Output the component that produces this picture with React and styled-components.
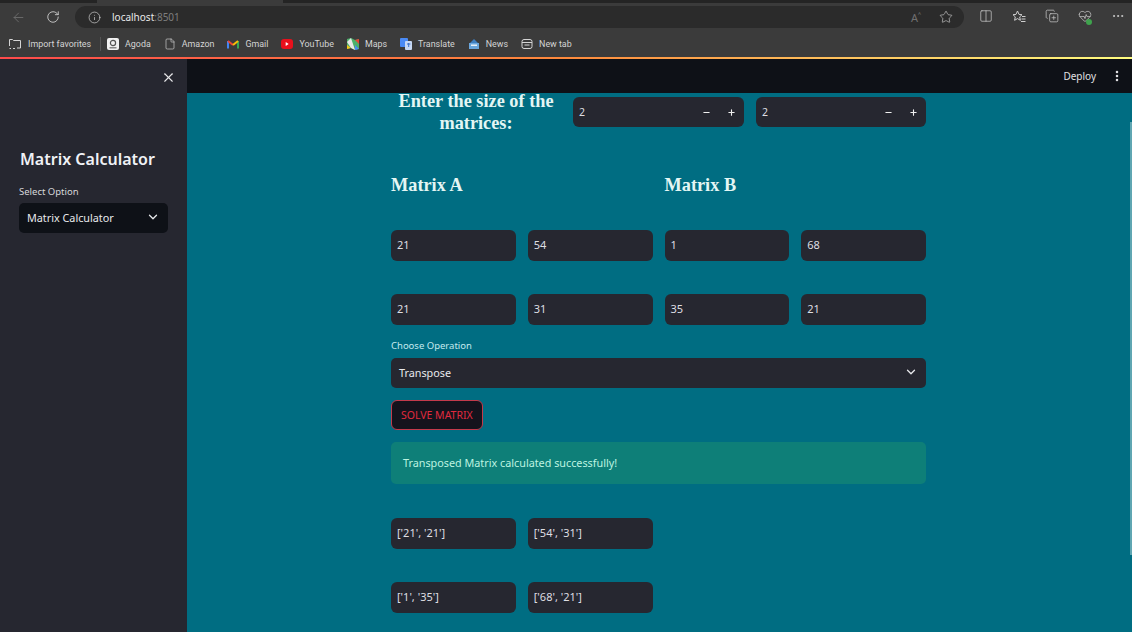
import styled, { createGlobalStyle } from 'styled-components';
import { ArrowLeft, RotateCw, Info, Star, Columns2, CopyPlus, HeartPulse, Ellipsis, File, X, ChevronDown, Minus, Plus, EllipsisVertical } from 'lucide-react';

const Global = createGlobalStyle`
  html, body { margin: 0; padding: 0; height: 100%; overflow: hidden; background: #006d82; }
  body { font-family: "Noto Sans", "Liberation Sans", sans-serif; }
  * { box-sizing: border-box; }
`;

const Page = styled.div`
  width: 1132px;
  height: 632px;
  display: flex;
  flex-direction: column;
  overflow: hidden;
`;

/* browser chrome */
const TabStrip = styled.div`
  height: 3px;
  flex: none;
  padding-left: 97px;
  background: #242424;
`;

const ActiveTab = styled.div`
  width: 186px;
  height: 3px;
  background: #3b3b3b;
`;

const Toolbar = styled.div`
  height: 28px;
  flex: none;
  display: flex;
  align-items: center;
  background: #3b3b3b;
  color: #d8d8d8;
`;

const ToolButton = styled.div`
  position: relative;
  width: ${p => p.$w || 33}px;
  flex: none;
  display: flex;
  justify-content: center;
  color: ${p => (p.$dim ? '#6f6f6f' : '#cfcfcf')};
`;

const HealthDot = styled.span`
  position: absolute;
  right: 9px;
  bottom: 0;
  width: 6px;
  height: 6px;
  border-radius: 50%;
  background: #3fa34d;
`;

const UrlPill = styled.div`
  flex: 1;
  height: 22px;
  margin: 0 5px;
  padding-right: 3px;
  display: flex;
  align-items: center;
  border-radius: 11px;
  background: #2b2b2b;
`;

const UrlText = styled.span`
  flex: 1;
  font-size: 10px;
  color: #e8e8e8;
  margin-left: -1px;
  span { color: #7e7e7e; }
`;

const ReadAloud = styled.span`
  font-size: 11px;
  sup { font-size: 7px; }
`;

const ToolIcons = styled.div`
  flex: none;
  display: flex;
  margin-right: -2px;
`;

const Bookmarks = styled.div`
  height: 26px;
  flex: none;
  display: flex;
  align-items: center;
  gap: 13px;
  padding-left: 8px;
  background: #3b3b3b;
`;

const Bookmark = styled.div`
  display: flex;
  align-items: center;
  gap: 6px;
  font-family: Roboto, "Liberation Sans", sans-serif;
  font-size: 8.9px;
  color: #d4d4d4;
  white-space: nowrap;
`;

const Separator = styled.div`
  width: 1px;
  height: 14px;
  margin: 0 -7px 0 -4px;
  background: #555;
`;

const Rainbow = styled.div`
  height: 2px;
  flex: none;
  background: linear-gradient(90deg, #ff4b4b, #fd8a3c 50%, #fffd80);
`;

/* streamlit app */
const AppBody = styled.div`
  flex: 1;
  min-height: 0;
  display: flex;
`;

const Sidebar = styled.aside`
  width: 187px;
  flex: none;
  padding: 0 19px;
  background: #262730;
`;

const CloseRow = styled.div`
  height: 26px;
  display: flex;
  align-items: flex-end;
  justify-content: flex-end;
  color: #e8e8ea;
  margin-right: -8px;
`;

const SideTitle = styled.h2`
  margin: 62px 0 0 1px;
  font-size: 16px;
  line-height: 24px;
  font-weight: 600;
  color: #f0f2f6;
`;

const SmallLabel = styled.div`
  font-size: 9.5px;
  line-height: 13px;
  color: ${p => p.$color || '#d6d7da'};
  margin-top: ${p => p.$top || 0}px;
`;

const SelectBox = styled.div`
  height: 30px;
  display: flex;
  align-items: center;
  justify-content: space-between;
  padding: 0 8px 2px 8px;
  margin-top: ${p => p.$top}px;
  border-radius: 5px;
  font-size: 10.8px;
  color: #e8e9ec;
  background: ${p => p.$bg || '#262730'};
`;

const MainColumn = styled.div`
  flex: 1;
  min-width: 0;
  display: flex;
  flex-direction: column;
`;

const Header = styled.header`
  height: 34px;
  flex: none;
  display: flex;
  align-items: center;
  justify-content: flex-end;
  gap: 14px;
  padding-right: 8px;
  background: #0e1117;
  color: #e0e0e3;
  font-size: 10px;
`;

const Content = styled.main`
  position: relative;
  flex: 1;
  min-height: 0;
  padding: 0 206px 0 204px;
  background: #006d82;
`;

const ScrollThumb = styled.div`
  position: absolute;
  top: 29px;
  right: 0;
  bottom: 77px;
  width: 2px;
  background: #5fa6b2;
`;

const SizeRow = styled.div`
  display: grid;
  grid-template-columns: 170px 171px 170px;
  gap: 12px;
`;

const SizeHeading = styled.h3`
  margin: -3px 0 0;
  text-align: center;
  font-family: "Liberation Serif", serif;
  font-size: 18.3px;
  line-height: 22px;
  font-weight: 700;
  color: #e4f6f4;
`;

const StepperBox = styled.div`
  height: 30px;
  margin-top: 4px;
  display: flex;
  align-items: center;
  padding: 0 8px 0 6px;
  border-radius: 6px;
  font-size: 10.5px;
  color: #dedee2;
  background: #262730;
`;

const StepValue = styled.span`
  flex: 1;
`;

const StepButton = styled.span`
  display: flex;
  margin-left: 16px;
  color: #f0f0f0;
`;

const MatrixTitles = styled.div`
  display: grid;
  grid-template-columns: 1fr 1fr;
  gap: 12px;
  margin-top: 39px;
`;

const MatrixTitle = styled.h3`
  margin: 0;
  font-family: "Liberation Serif", serif;
  font-size: 18.3px;
  line-height: 24px;
  font-weight: 700;
  color: #e4f6f4;
`;

const CellRow = styled.div`
  display: grid;
  grid-template-columns: repeat(4, 1fr);
  gap: 12px;
  margin-top: ${p => p.$top}px;
`;

const Cell = styled.div`
  height: 31px;
  display: flex;
  align-items: center;
  padding: 0 6px 2px;
  border-radius: 6px;
  font-size: 11px;
  color: #dedee2;
  background: #262730;
`;

const SolveButton = styled.button`
  display: block;
  height: 30px;
  margin-top: 12px;
  padding: 0 9px;
  border: 1px solid #c23a4b;
  border-radius: 6px;
  font-family: inherit;
  font-size: 10.5px;
  color: #e02a3e;
  background: #14131c;
`;

const Success = styled.div`
  height: 42px;
  margin-top: 12px;
  display: flex;
  align-items: center;
  padding: 0 12px 2px;
  border-radius: 5px;
  font-size: 10.8px;
  color: #bdf3e0;
  background: #0e7f78;
`;

/* small coloured bookmark icons */
const ImportIcon = () => (
  <svg width="14" height="14" viewBox="0 0 14 14" fill="none" stroke="#d4d4d4" strokeWidth="1">
    <path d="M1.5 9V2.5h3l1 1h7V11H9" />
    <path d="M1.5 11.5h1.5M5 11.5h2" />
  </svg>
);

const AgodaIcon = () => (
  <svg width="12" height="12" viewBox="0 0 12 12">
    <rect width="12" height="12" rx="2" fill="#f2f2f2" />
    <circle cx="6" cy="5" r="2.6" fill="none" stroke="#555" strokeWidth="1.2" />
    <rect x="2.5" y="9" width="7" height="1.5" fill="#888" />
  </svg>
);

const GmailIcon = () => (
  <svg width="12" height="10" viewBox="0 0 12 10" fill="none" strokeWidth="2">
    <path d="M1 9.5V2" stroke="#4285f4" />
    <path d="M11 9.5V2" stroke="#34a853" />
    <path d="M1 2l5 4" stroke="#ea4335" />
    <path d="M6 6l5-4" stroke="#fbbc05" />
  </svg>
);

const YoutubeIcon = () => (
  <svg width="12" height="10" viewBox="0 0 12 10">
    <rect width="12" height="10" rx="3" fill="#e8101c" />
    <path d="M4.7 3l3 2-3 2z" fill="#fff" />
  </svg>
);

const MapsIcon = () => (
  <svg width="12" height="12" viewBox="0 0 12 12">
    <path d="M0 1l4-1 4 2 4-1v10l-4 1-4-2-4 1z" fill="#4caf6a" />
    <path d="M4 0l4 12-4-2L0 4z" fill="#e8e8e8" />
    <path d="M8 2l4-1v5z" fill="#e84335" />
    <path d="M0 7l4 3-4 1z" fill="#f5c518" />
    <path d="M8 7l4 4-4 1z" fill="#4a8af4" />
  </svg>
);

const TranslateIcon = () => (
  <svg width="12" height="12" viewBox="0 0 12 12">
    <rect width="8" height="9" rx="1" fill="#4a8af4" />
    <rect x="5" y="3" width="7" height="9" rx="1" fill="#c7d9f5" />
    <path d="M7 6h3.4M8.7 5v4" stroke="#3a6fc8" strokeWidth="1" />
  </svg>
);

const NewsIcon = () => (
  <svg width="12" height="12" viewBox="0 0 12 12">
    <path d="M1 5h10v6H1z" fill="#6aa6dc" />
    <path d="M2 5l4-4 4 4z" fill="#3f7fc0" />
    <rect x="3" y="6.5" width="6" height="1.5" fill="#e8f0f8" />
  </svg>
);

const NewTabIcon = () => (
  <svg width="12" height="12" viewBox="0 0 12 12" fill="none" stroke="#d4d4d4" strokeWidth="1">
    <rect x="1" y="1.5" width="10" height="9" rx="2" />
    <path d="M1 4.5h10M3.5 7h5" />
  </svg>
);

const FavoritesIcon = () => (
  <svg width="16" height="16" viewBox="0 0 16 16" fill="none" stroke="#cfcfcf" strokeWidth="1">
    <path d="M6.5 2l1.5 3.4 3 .3-2.3 2.2.7 3.4-2.9-1.7-2.9 1.7.7-3.4L2 5.7l3-.3z" />
    <path d="M11 7.5h3.5M10.5 10h4M10 12.5h4.5" />
  </svg>
);

const bookmarks = [
  { icon: <AgodaIcon />, label: 'Agoda' },
  { icon: <File size={12} strokeWidth={1.3} color="#d4d4d4" />, label: 'Amazon' },
  { icon: <GmailIcon />, label: 'Gmail' },
  { icon: <YoutubeIcon />, label: 'YouTube' },
  { icon: <MapsIcon />, label: 'Maps' },
  { icon: <TranslateIcon />, label: 'Translate' },
  { icon: <NewsIcon />, label: 'News' },
  { icon: <NewTabIcon />, label: 'New tab' },
];

function Stepper({ value }) {
  return (
    <StepperBox>
      <StepValue>{value}</StepValue>
      <StepButton><Minus size={9} strokeWidth={3} /></StepButton>
      <StepButton><Plus size={9} strokeWidth={3} /></StepButton>
    </StepperBox>
  );
}

export default function App() {
  return (
    <Page>
      <Global />
      <TabStrip><ActiveTab /></TabStrip>
      <Toolbar>
        <ToolButton $w={36} $dim><ArrowLeft size={15} strokeWidth={1.4} /></ToolButton>
        <ToolButton $w={34}><RotateCw size={14} strokeWidth={1.5} /></ToolButton>
        <UrlPill>
          <ToolButton $w={38}><Info size={13} strokeWidth={1.3} /></ToolButton>
          <UrlText>localhost<span>:8501</span></UrlText>
          <ToolButton $w={30} $dim><ReadAloud>A<sup>ᴬ</sup></ReadAloud></ToolButton>
          <ToolButton $w={30}><Star size={14} strokeWidth={1.1} /></ToolButton>
        </UrlPill>
        <ToolIcons>
          <ToolButton><Columns2 size={14} strokeWidth={1.2} /></ToolButton>
          <ToolButton><FavoritesIcon /></ToolButton>
          <ToolButton><CopyPlus size={14} strokeWidth={1.2} /></ToolButton>
          <ToolButton><HeartPulse size={14} strokeWidth={1.2} /><HealthDot /></ToolButton>
          <ToolButton><Ellipsis size={14} strokeWidth={1.6} /></ToolButton>
        </ToolIcons>
      </Toolbar>
      <Bookmarks>
        <Bookmark><ImportIcon />Import favorites</Bookmark>
        <Separator />
        {bookmarks.map(b => (
          <Bookmark key={b.label}>{b.icon}{b.label}</Bookmark>
        ))}
      </Bookmarks>
      <Rainbow />
      <AppBody>
        <Sidebar>
          <CloseRow><X size={15} strokeWidth={1.8} /></CloseRow>
          <SideTitle>Matrix Calculator</SideTitle>
          <SmallLabel $top={14}>Select Option</SmallLabel>
          <SelectBox $top={5} $bg="#0e1117">
            Matrix Calculator
            <ChevronDown size={14} strokeWidth={2.2} />
          </SelectBox>
        </Sidebar>
        <MainColumn>
          <Header>
            Deploy
            <EllipsisVertical size={14} strokeWidth={2.4} />
          </Header>
          <Content>
            <SizeRow>
              <SizeHeading>Enter the size of the matrices:</SizeHeading>
              <Stepper value="2" />
              <Stepper value="2" />
            </SizeRow>
            <MatrixTitles>
              <MatrixTitle>Matrix A</MatrixTitle>
              <MatrixTitle>Matrix B</MatrixTitle>
            </MatrixTitles>
            <CellRow $top={33}>
              {['21', '54', '1', '68'].map((v, i) => <Cell key={i}>{v}</Cell>)}
            </CellRow>
            <CellRow $top={33}>
              {['21', '31', '35', '21'].map((v, i) => <Cell key={i}>{v}</Cell>)}
            </CellRow>
            <SmallLabel $top={14} $color="#c4eaee">Choose Operation</SmallLabel>
            <SelectBox $top={6}>
              Transpose
              <ChevronDown size={14} strokeWidth={2.2} />
            </SelectBox>
            <SolveButton>SOLVE MATRIX</SolveButton>
            <Success>Transposed Matrix calculated successfully!</Success>
            <CellRow $top={34}>
              <Cell>['21', '21']</Cell>
              <Cell>['54', '31']</Cell>
            </CellRow>
            <CellRow $top={33}>
              <Cell>['1', '35']</Cell>
              <Cell>['68', '21']</Cell>
            </CellRow>
            <ScrollThumb />
          </Content>
        </MainColumn>
      </AppBody>
    </Page>
  );
}
